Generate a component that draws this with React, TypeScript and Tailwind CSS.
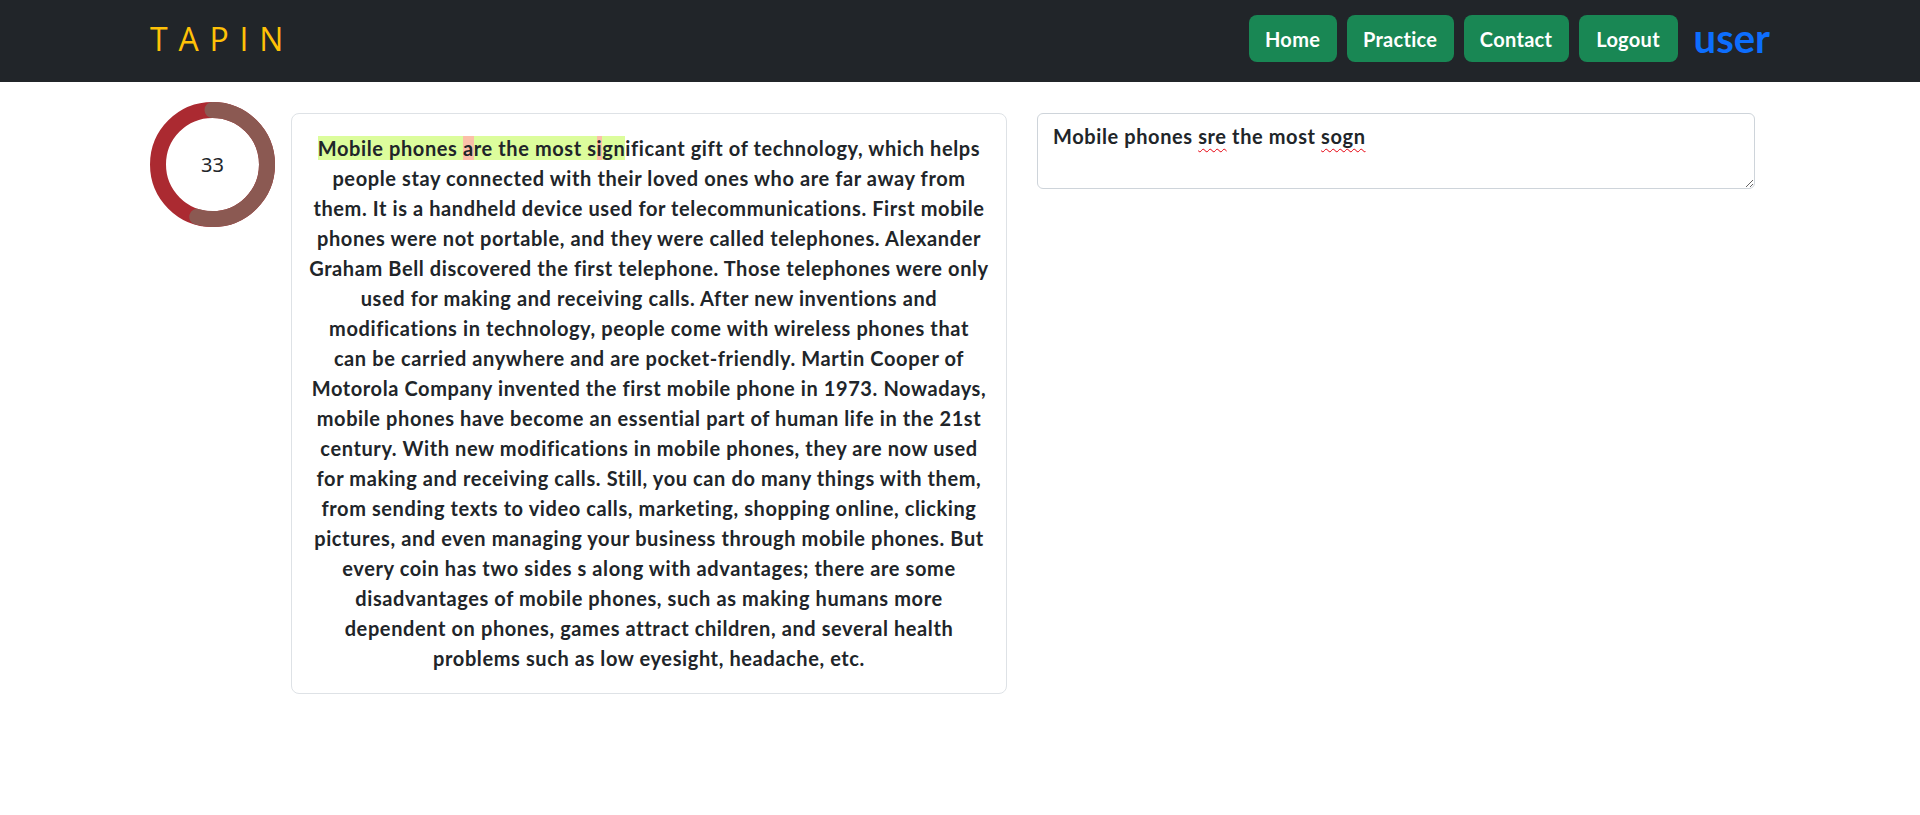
import React from "react";

const navLinks = [
  { label: "Home", w: "w-[88px]" },
  { label: "Practice", w: "w-[107px]" },
  { label: "Contact", w: "w-[105px]" },
  { label: "Logout", w: "w-[99px]" },
];

const lines = [
  "people stay connected with their loved ones who are far away from",
  "them. It is a handheld device used for telecommunications. First mobile",
  "phones were not portable, and they were called telephones. Alexander",
  "Graham Bell discovered the first telephone. Those telephones were only",
  "used for making and receiving calls. After new inventions and",
  "modifications in technology, people come with wireless phones that",
  "can be carried anywhere and are pocket-friendly. Martin Cooper of",
  "Motorola Company invented the first mobile phone in 1973. Nowadays,",
  "mobile phones have become an essential part of human life in the 21st",
  "century. With new modifications in mobile phones, they are now used",
  "for making and receiving calls. Still, you can do many things with them,",
  "from sending texts to video calls, marketing, shopping online, clicking",
  "pictures, and even managing your business through mobile phones. But",
  "every coin has two sides s along with advantages; there are some",
  "disadvantages of mobile phones, such as making humans more",
  "dependent on phones, games attract children, and several health",
  "problems such as low eyesight, headache, etc.",
];

const Timer = ({ value }: { value: number }) => {
  const r = 54.5;
  const c = 2 * Math.PI * r;
  const arc = (c * 196) / 360;
  return (
    <div className="relative w-[125px] h-[125px] shrink-0">
      <svg width="125" height="125" viewBox="0 0 125 125">
        <circle cx="62.5" cy="62.5" r={r} fill="none" stroke="#ab2a31" strokeWidth="16" />
        <circle
          cx="62.5"
          cy="62.5"
          r={r}
          fill="none"
          stroke="#8b5952"
          strokeWidth="16"
          strokeLinecap="round"
          strokeDasharray={`${arc} ${c}`}
          transform="rotate(-90 62.5 62.5)"
        />
      </svg>
      <span className="absolute inset-0 flex items-center justify-center text-[20px] text-[#212529] font-['Noto_Sans',sans-serif]">
        {value}
      </span>
    </div>
  );
};

export default function App() {
  return (
    <div className="min-h-screen bg-white font-['Lato','Noto_Sans',sans-serif]">
      <nav className="h-[82px] bg-[#212529] flex items-center justify-between px-[150px] pb-[5px]">
        <span className="text-[32px] text-[#ffc107] tracking-[10.8px] font-['Open_Sans',sans-serif] leading-none">
          TAPIN
        </span>
        <div className="flex items-center gap-[10px]">
          {navLinks.map((l) => (
            <button
              key={l.label}
              className={`${l.w} h-[47px] rounded-lg bg-[#198754] text-white text-[20px] font-bold tracking-[0.3px] flex items-center justify-center`}
            >
              {l.label}
            </button>
          ))}
          <span className="ml-[6px] text-[40px] font-bold text-[#0d6efd] leading-none pb-[2px]">user</span>
        </div>
      </nav>

      <main className="flex items-start px-[150px] pt-[20px]">
        <Timer value={33} />

        <div className="ml-[16px] mt-[11px] w-[716px] border border-[#dee2e6] rounded-lg px-4 pt-[19px] pb-[20px]">
          <p className="text-center text-[20px] leading-[30px] font-bold tracking-[0.6px] text-[#212529] whitespace-nowrap">
            <span className="bg-[#dcfd9c]">Mobile phones </span>
            <span className="bg-[#fbbfa8]">a</span>
            <span className="bg-[#dcfd9c]">re the most s</span>
            <span className="bg-[#fbbfa8]">i</span>
            <span className="bg-[#dcfd9c]">gn</span>
            ificant gift of technology, which helps
            {lines.map((line) => (
              <React.Fragment key={line}>
                <br />
                {line}
              </React.Fragment>
            ))}
          </p>
        </div>

        <div className="ml-[30px] mt-[11px] w-[718px] h-[76px] border border-[#ced4da] rounded-md pl-[15px] pr-3 py-[7px] resize overflow-auto text-[20px] leading-[30px] font-bold tracking-[0.6px] text-[#212529]">
          Mobile phones{" "}
          <span className="underline decoration-wavy decoration-red-600 decoration-1 underline-offset-4">sre</span>{" "}
          the most{" "}
          <span className="underline decoration-wavy decoration-red-600 decoration-1 underline-offset-4">sogn</span>
        </div>
      </main>
    </div>
  );
}
